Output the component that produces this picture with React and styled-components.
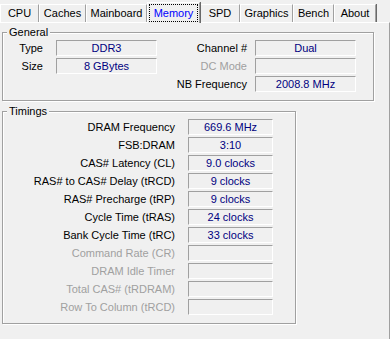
import React from 'react'
import styled, { createGlobalStyle } from 'styled-components'

const GlobalStyle = createGlobalStyle`
  html, body {
    margin: 0;
    padding: 0;
    background: #f0f0f0;
  }
  body {
    font-family: "Liberation Sans", Arial, sans-serif;
    font-size: 11px;
    color: #000;
  }
`

const TABS = [
  { name: 'CPU', w: 39 },
  { name: 'Caches', w: 47 },
  { name: 'Mainboard', w: 61 },
  { name: 'Memory', w: 53, active: true },
  { name: 'SPD', w: 40 },
  { name: 'Graphics', w: 53 },
  { name: 'Bench', w: 41 },
  { name: 'About', w: 42 },
]

const GENERAL = [
  { label: 'Type', value: 'DDR3', right: 'Channel #', rightValue: 'Dual' },
  { label: 'Size', value: '8 GBytes', right: 'DC Mode', rightValue: '', rightDisabled: true },
  { label: '', value: null, right: 'NB Frequency', rightValue: '2008.8 MHz' },
]

const TIMINGS = [
  { label: 'DRAM Frequency', value: '669.6 MHz' },
  { label: 'FSB:DRAM', value: '3:10' },
  { label: 'CAS# Latency (CL)', value: '9.0 clocks' },
  { label: 'RAS# to CAS# Delay (tRCD)', value: '9 clocks' },
  { label: 'RAS# Precharge (tRP)', value: '9 clocks' },
  { label: 'Cycle Time (tRAS)', value: '24 clocks' },
  { label: 'Bank Cycle Time (tRC)', value: '33 clocks' },
  { label: 'Command Rate (CR)', value: '', disabled: true },
  { label: 'DRAM Idle Timer', value: '', disabled: true },
  { label: 'Total CAS# (tRDRAM)', value: '', disabled: true },
  { label: 'Row To Column (tRCD)', value: '', disabled: true },
]

const App = () => (
  <Window>
    <GlobalStyle />
    <TabStrip>
      {TABS.map(t => (
        <Tab key={t.name} $w={t.w} $active={t.active}>
          {t.active ? <FocusLabel>{t.name}</FocusLabel> : t.name}
        </Tab>
      ))}
    </TabStrip>
    <Panel>
      <Group $w={372}>
        <Legend>General</Legend>
        <GeneralGrid>
          {GENERAL.map((r, i) => (
            <React.Fragment key={i}>
              <Label $pad={13}>{r.label}</Label>
              {r.value !== null ? <Field>{r.value}</Field> : <span />}
              <Label $pad={8} $disabled={r.rightDisabled}>{r.right}</Label>
              <Field>{r.rightValue}</Field>
            </React.Fragment>
          ))}
        </GeneralGrid>
      </Group>
      <Group $w={294}>
        <Legend>Timings</Legend>
        <TimingsGrid>
          {TIMINGS.map(r => (
            <React.Fragment key={r.label}>
              <Label $pad={13} $disabled={r.disabled}>{r.label}</Label>
              <Field>{r.value}</Field>
            </React.Fragment>
          ))}
        </TimingsGrid>
      </Group>
    </Panel>
  </Window>
)

const Window = styled.div`
  width: 390px;
  height: 339px;
  overflow: hidden;
  display: flex;
  flex-direction: column;
`

const TabStrip = styled.div`
  display: flex;
  align-items: flex-end;
  height: 22px;
  flex-shrink: 0;
`

const Tab = styled.div`
  box-sizing: border-box;
  width: ${({ $w }) => $w}px;
  height: ${({ $active }) => ($active ? 21 : 18)}px;
  margin-bottom: ${({ $active }) => ($active ? -1 : 0)}px;
  position: relative;
  z-index: ${({ $active }) => ($active ? 1 : 0)};
  display: flex;
  align-items: center;
  justify-content: center;
  padding: ${({ $active }) => ($active ? '1px 1px 1px 1px' : '0 0 1px')};
  background: #f0f0f0;
  border-left: 1px solid #fff;
  border-top: 1px solid #fff;
  border-right: 1px solid #a0a0a0;
  box-shadow: 1px 0 0 #696969;
  color: ${({ $active }) => ($active ? '#0000ff' : '#000')};
`

const FocusLabel = styled.span`
  flex: 1;
  align-self: stretch;
  display: flex;
  align-items: center;
  justify-content: center;
  border: 1px dotted #000;
`

const Panel = styled.div`
  flex: 1;
  border-top: 1px solid #fff;
  border-right: 1px solid #a0a0a0;
  box-shadow: 1px 0 0 #696969;
  padding: 3px 0 0 2px;
  display: flex;
  flex-direction: column;
  gap: 4px;
`

const Group = styled.fieldset`
  box-sizing: border-box;
  width: ${({ $w }) => $w}px;
  margin: 0;
  padding: 0 0 8px;
  border: 1px solid #a0a0a0;
  box-shadow: inset 1px 1px 0 #fff, 1px 1px 0 #fff;
  min-width: 0;
`

const Legend = styled.legend`
  margin-left: 4px;
  padding: 0 2px;
  line-height: 12px;
  background: #f0f0f0;
`

const GeneralGrid = styled.div`
  display: grid;
  grid-template-columns: 53px 101px 98px 101px;
  grid-auto-rows: 16px;
  row-gap: 2px;
  margin-top: 2px;
`

const TimingsGrid = styled.div`
  display: grid;
  grid-template-columns: 185px 85px;
  grid-auto-rows: 16px;
  row-gap: 2px;
  margin-top: 2px;
`

const Label = styled.div`
  display: flex;
  align-items: center;
  justify-content: flex-end;
  padding-right: ${({ $pad }) => $pad}px;
  white-space: nowrap;
  color: ${({ $disabled }) => ($disabled ? '#a0a0a0' : '#000')};
`

const Field = styled.div`
  box-sizing: border-box;
  display: flex;
  align-items: center;
  justify-content: center;
  border-top: 1px solid #a0a0a0;
  border-left: 1px solid #a0a0a0;
  border-right: 1px solid #fff;
  border-bottom: 1px solid #fff;
  color: #000080;
  white-space: nowrap;
`

export default App
